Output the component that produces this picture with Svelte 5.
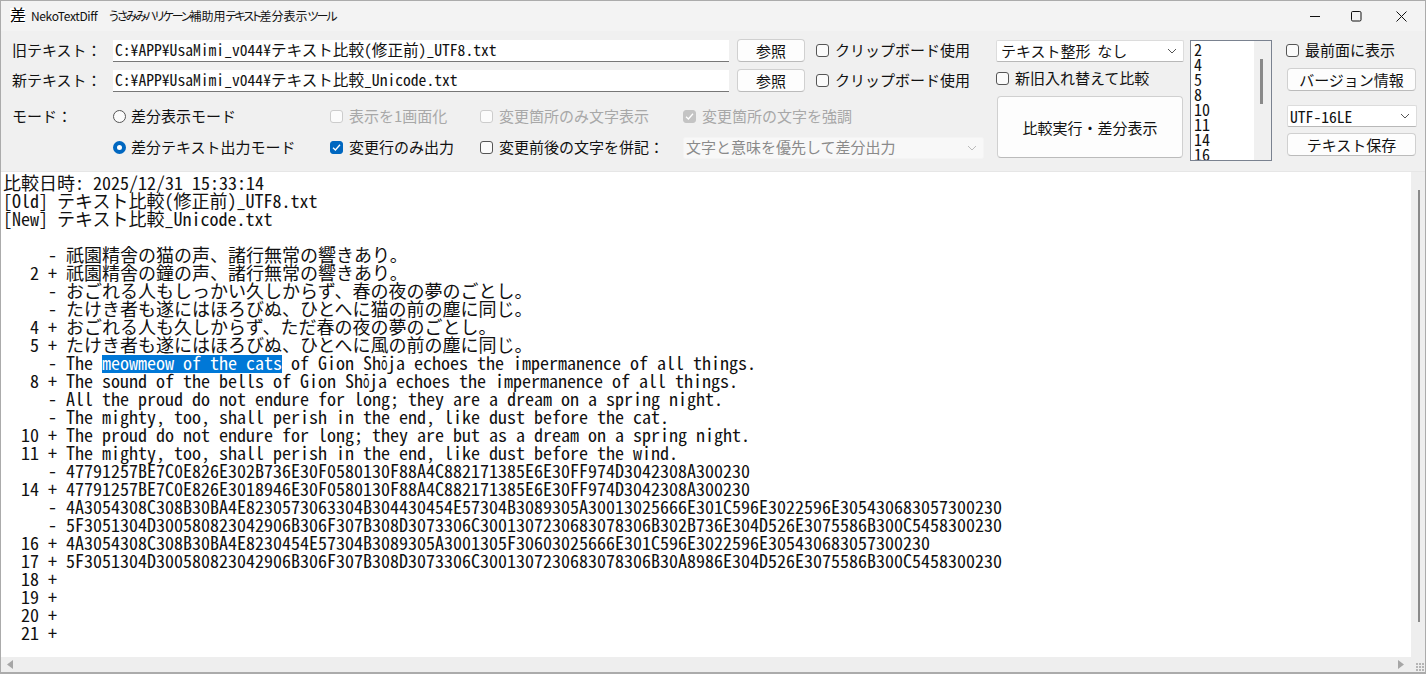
<script>
  const lines = [
    "比較日時: 2025/12/31 15:33:14",
    "[Old] テキスト比較(修正前)_UTF8.txt",
    "[New] テキスト比較_Unicode.txt",
    "",
    "     - 祇園精舎の猫の声、諸行無常の響きあり。",
    "   2 + 祇園精舎の鐘の声、諸行無常の響きあり。",
    "     - おごれる人もしっかい久しからず、春の夜の夢のごとし。",
    "     - たけき者も遂にはほろびぬ、ひとへに猫の前の塵に同じ。",
    "   4 + おごれる人も久しからず、ただ春の夜の夢のごとし。",
    "   5 + たけき者も遂にはほろびぬ、ひとへに風の前の塵に同じ。",
    "SEL",
    "   8 + The sound of the bells of Gion Shōja echoes the impermanence of all things.",
    "     - All the proud do not endure for long; they are a dream on a spring night.",
    "     - The mighty, too, shall perish in the end, like dust before the cat.",
    "  10 + The proud do not endure for long; they are but as a dream on a spring night.",
    "  11 + The mighty, too, shall perish in the end, like dust before the wind.",
    "     - 47791257BE7C0E826E302B736E30F0580130F88A4C882171385E6E30FF974D3042308A300230",
    "  14 + 47791257BE7C0E826E3018946E30F0580130F88A4C882171385E6E30FF974D3042308A300230",
    "     - 4A3054308C308B30BA4E8230573063304B304430454E57304B3089305A30013025666E301C596E3022596E305430683057300230",
    "     - 5F3051304D300580823042906B306F307B308D3073306C3001307230683078306B302B736E304D526E3075586B300C5458300230",
    "  16 + 4A3054308C308B30BA4E8230454E57304B3089305A3001305F30603025666E301C596E3022596E305430683057300230",
    "  17 + 5F3051304D300580823042906B306F307B308D3073306C3001307230683078306B30A8986E304D526E3075586B300C5458300230",
    "  18 +",
    "  19 +",
    "  20 +",
    "  21 +"
  ];
</script>

{#snippet check(text, state = "")}
  <label class="check {state}">
    <span class="box">
      {#if state.includes("on")}
        <svg width="9" height="9" viewBox="0 0 9 9"><polyline points="1,4.8 3.4,7 8,1.8" fill="none" stroke="#fff" stroke-width="1.3" /></svg>
      {/if}
    </span>
    <span class="t">{text}</span>
  </label>
{/snippet}

{#snippet radio(text, on = false)}
  <label class="radio"><span class="dot" class:on></span><span class="t">{text}</span></label>
{/snippet}

{#snippet chevron(color = "#555")}
  <svg class="chev" width="10" height="6" viewBox="0 0 10 6"><polyline points="1,1 5,5 9,1" fill="none" stroke={color} /></svg>
{/snippet}

{#snippet macron(text)}
  {#each text.split("ō") as part, i}{#if i > 0}<span class="mac">ō</span>{/if}{part}{/each}
{/snippet}

<main>
  <header>
    <span class="logo">差</span>
    <span class="name">NekoTextDiff</span>
    <span class="sub"><span class="kana">うさみみハリケーン</span>補助用<span class="kana">テキスト</span>差分表示<span class="kana">ツール</span></span>
    <div class="controls">
      <svg width="11" height="11" viewBox="0 0 11 11"><line x1="0" y1="5.5" x2="10" y2="5.5" stroke="#111" /></svg>
      <svg width="11" height="11" viewBox="0 0 11 11"><rect x="0.5" y="0.5" width="9.5" height="9.5" rx="1.2" fill="none" stroke="#111" /></svg>
      <svg width="11" height="11" viewBox="0 0 11 11"><path d="M0.5 0.5 10.5 10.5M10.5 0.5 0.5 10.5" stroke="#111" /></svg>
    </div>
  </header>

  <section class="tools">
    <div class="left">
      <div class="path-row">
        <span class="t">旧テキスト：</span>
        <div class="path">C:¥APP¥UsaMimi_v044¥テキスト比較(修正前)_UTF8.txt</div>
        <button>参照</button>
        {@render check("クリップボード使用")}
      </div>
      <div class="path-row">
        <span class="t">新テキスト：</span>
        <div class="path">C:¥APP¥UsaMimi_v044¥テキスト比較_Unicode.txt</div>
        <button>参照</button>
        {@render check("クリップボード使用")}
      </div>
      <div class="mode-row first">
        <span class="mode-label">モード：</span>
        {@render radio("差分表示モード")}
        {@render check("表示を1画面化", "off")}
        {@render check("変更箇所のみ文字表示", "off")}
        {@render check("変更箇所の文字を強調", "off on")}
      </div>
      <div class="mode-row">
        <span></span>
        {@render radio("差分テキスト出力モード", true)}
        {@render check("変更行のみ出力", "on")}
        {@render check("変更前後の文字を併記：")}
        <div class="select disabled"><span class="t">文字と意味を優先して差分出力</span>{@render chevron("#bbb")}</div>
      </div>
    </div>

    <div class="middle">
      <div class="select"><span class="t">テキスト整形&nbsp; なし</span>{@render chevron()}</div>
      {@render check("新旧入れ替えて比較")}
      <button class="run">比較実行・差分表示</button>
    </div>

    <div class="list">
      <div class="items">
        {#each [2, 4, 5, 8, 10, 11, 14, 16] as n}
          <div>{n}</div>
        {/each}
      </div>
      <div class="list-bar"><span></span></div>
    </div>

    <div class="right">
      {@render check("最前面に表示")}
      <button class="version">バージョン情報</button>
      <div class="select mono">UTF-16LE{@render chevron()}</div>
      <button class="save">テキスト保存</button>
    </div>
  </section>

  <section class="output">
    <div class="text">
      {#each lines as line}
        {#if line === "SEL"}
          <div class="line">{"     - The "}<span class="sel">meowmeow of the cats</span>{@render macron(" of Gion Shōja echoes the impermanence of all things.")}</div>
        {:else}
          <div class="line">{@render macron(line)}</div>
        {/if}
      {/each}
    </div>
    <div class="vbar"><span></span></div>
  </section>

  <div class="hbar">
    <svg width="7" height="9" viewBox="0 0 7 9"><path d="M6 0V9L0 4.5Z" fill="#a6a6a6" /></svg>
    <svg width="7" height="9" viewBox="0 0 7 9"><path d="M0 0V9L6 4.5Z" fill="#a6a6a6" /></svg>
    <div class="grip"></div>
  </div>
</main>

<style>
  :global(body) {
    margin: 0;
    overflow: hidden;
  }
  main {
    box-sizing: border-box;
    height: 100vh;
    display: flex;
    flex-direction: column;
    border: 1px solid #ababab;
    border-bottom-width: 2px;
    background: #f0f0f0;
    color: #111;
    font-family: "Noto Sans CJK JP", "Noto Sans", sans-serif;
    font-size: 15px;
  }
  header {
    height: 30px;
    flex: none;
    display: flex;
    align-items: center;
    background: #f3f3f3;
    font-size: 12px;
  }
  .logo {
    width: 15px;
    height: 15px;
    margin: 0 0 1px 9px;
    background: #fff;
    font-size: 16px;
    line-height: 13px;
    color: #000;
  }
  .name {
    margin: 0 0 2px 6px;
    width: 78px;
    letter-spacing: -0.35px;
  }
  .sub {
    margin-bottom: 2px;
    font-feature-settings: "palt" 1;
  }
  .kana {
    letter-spacing: -2px;
  }
  .controls {
    margin-left: auto;
    display: flex;
    gap: 30px;
    margin-right: 18px;
  }
  .controls svg:nth-child(3) {
    margin-left: 4px;
  }
  .tools {
    height: 141px;
    flex: none;
    box-sizing: border-box;
    display: flex;
    padding: 8px 0 0 11px;
  }
  .left {
    width: 972px;
    flex: none;
    display: flex;
    flex-direction: column;
    gap: 7px;
  }
  .t {
    margin-bottom: 2px;
  }
  .path-row {
    height: 23px;
    display: flex;
    align-items: center;
  }
  .path-row > .t {
    width: 101px;
    flex: none;
    margin-bottom: 3px;
  }
  .path {
    box-sizing: border-box;
    width: 616px;
    height: 22px;
    padding-left: 2px;
    background: #fff;
    border-bottom: 1px solid #777;
    font-size: 15.6px;
    line-height: 18px;
    font-feature-settings: "hwid" 1;
    white-space: pre;
  }
  button {
    box-sizing: border-box;
    height: 23px;
    padding: 0;
    background: #fdfdfd;
    border: 1px solid #d0d0d0;
    border-bottom-color: #bbb;
    border-radius: 4px;
    color: #111;
    font: inherit;
    line-height: 19px;
  }
  .path-row button {
    width: 68px;
    margin: 0 11px 0 8px;
  }
  .mode-row {
    height: 23px;
    display: grid;
    grid-template-columns: 101px 217px 150px 203px 301px;
    align-items: center;
    margin-top: 1px;
  }
  .mode-row.first {
    margin-top: 6px;
  }
  .mode-label {
    align-self: start;
  }
  .check,
  .radio {
    display: flex;
    align-items: center;
    height: 20px;
    white-space: nowrap;
  }
  .box {
    box-sizing: border-box;
    width: 13px;
    height: 13px;
    margin-right: 6px;
    display: flex;
    align-items: center;
    justify-content: center;
    flex: none;
    border: 1px solid #555;
    border-radius: 3px;
    background: #fbfbfb;
  }
  .check.off {
    color: #a8a8a8;
  }
  .check.off .box {
    border-color: #ccc;
  }
  .check.on .box {
    background: #0067c0;
    border-color: #0067c0;
  }
  .check.off.on .box {
    background: #c4c4c4;
    border-color: #c4c4c4;
  }
  .dot {
    box-sizing: border-box;
    width: 13px;
    height: 13px;
    margin-right: 5px;
    flex: none;
    border: 1px solid #555;
    border-radius: 50%;
    background: #fbfbfb;
  }
  .dot.on {
    border: 4px solid #0067c0;
    background: #fff;
  }
  .select {
    box-sizing: border-box;
    height: 22px;
    display: flex;
    align-items: center;
    justify-content: space-between;
    padding: 0 4px 0 4px;
    background: #fff;
    border: 1px solid #dcdcdc;
    border-bottom-color: #b8b8b8;
    border-radius: 2px;
    white-space: nowrap;
  }
  .select.disabled {
    padding-left: 2px;
    background: #f8f8f8;
    border-color: #f4f4f4;
    color: #8a8a8a;
  }
  .chev {
    flex: none;
    margin-right: 2px;
  }
  .middle {
    width: 188px;
    margin-left: 12px;
    display: flex;
    flex-direction: column;
    padding-top: 1px;
  }
  .middle .check {
    margin-top: 6px;
  }
  .run {
    width: 186px;
    height: 62px;
    margin: 8px 0 0 1px;
  }
  .list {
    box-sizing: border-box;
    width: 82px;
    height: 121px;
    margin: 1px 0 0 6px;
    display: flex;
    background: #fff;
    border: 1px solid #7a8290;
    overflow: hidden;
  }
  .items {
    flex: 1;
    padding: 1px 0 0 3px;
    font-size: 16px;
    line-height: 15px;
    font-feature-settings: "hwid" 1;
  }
  .list-bar {
    width: 17px;
    background: #f0f0f0;
    padding: 18px 0 0 6px;
    box-sizing: border-box;
  }
  .list-bar span {
    display: block;
    width: 3px;
    height: 45px;
    background: #8a8a8a;
  }
  .right {
    width: 131px;
    margin-left: 14px;
    display: flex;
    flex-direction: column;
    padding-top: 1px;
  }
  .right button {
    width: 129px;
    height: 23px;
    margin-left: 1px;
  }
  .right .version {
    margin-top: 8px;
  }
  .right .select {
    height: 22px;
    margin: 14px 0 0 1px;
    width: 130px;
    padding-left: 2px;
  }
  .right .save {
    margin-top: 6px;
  }
  .mono {
    font-size: 15.6px;
    font-feature-settings: "hwid" 1;
  }
  .output {
    flex: 1;
    min-height: 0;
    display: flex;
    background: #fff;
    border-top: 1px solid #e6e6e6;
    margin-top: -1px;
  }
  .text {
    flex: 1;
    min-width: 0;
    padding: 3px 0 0 2px;
    color: #111;
    font-size: 18px;
    line-height: 14px;
    font-feature-settings: "hwid" 1;
  }
  .line {
    height: 18px;
    white-space: pre;
  }
  .sel {
    display: inline-block;
    height: 18px;
    vertical-align: top;
    background: #0078d7;
    color: #fff;
  }
  .mac {
    display: inline-block;
    vertical-align: top;
    width: 6px;
    transform: scaleX(0.6);
    transform-origin: left;
  }
  .vbar {
    width: 14px;
    flex: none;
    padding: 18px 0 0 7px;
    box-sizing: border-box;
    background: #eee;
  }
  .vbar span {
    display: block;
    width: 2px;
    height: 432px;
    background: #8a8a8a;
  }
  .hbar {
    height: 15px;
    flex: none;
    display: flex;
    align-items: center;
    justify-content: space-between;
    padding: 0 20px 0 6px;
    position: relative;
    background: #eee;
  }
  .grip {
    position: absolute;
    right: 1px;
    bottom: 1px;
    width: 8px;
    height: 8px;
    background: radial-gradient(circle at 1px 1px, #b5b5b5 1px, transparent 1px) 0 0 / 3px 3px;
  }
</style>
